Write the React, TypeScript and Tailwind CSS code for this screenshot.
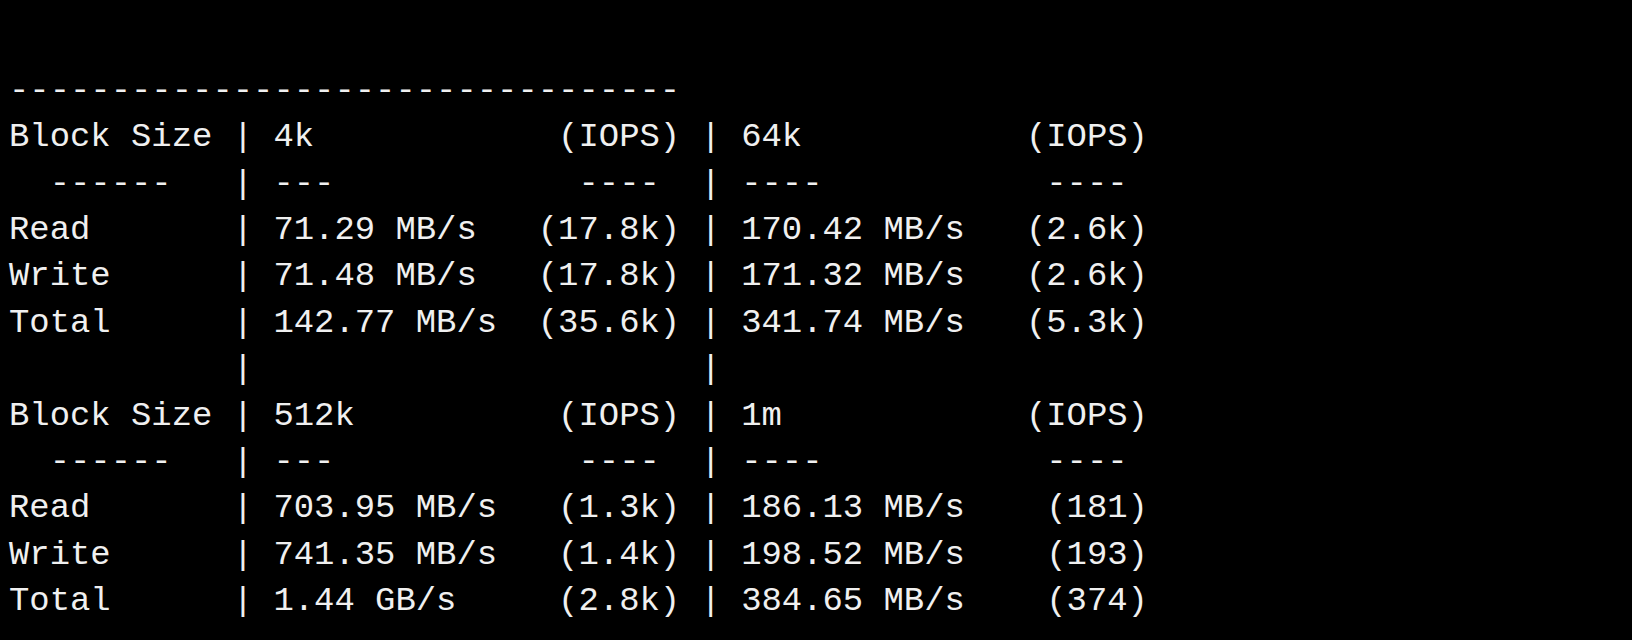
import React from "react";

type TRow = [string, string, string, string, string];

const fmt = (row: TRow) => {
  const [label, a, aIops, b, bIops] = row;
  return `${label.padEnd(10)} | ${a.padEnd(11)} ${aIops.padStart(8)} | ${b.padEnd(11)} ${bIops.padStart(8)}`;
};

const lines: string[] = [
  "---------------------------------",
  fmt(["Block Size", "4k", "(IOPS)", "64k", "(IOPS)"]),
  fmt(["  ------", "---", "---- ", "----", "---- "]),
  fmt(["Read", "71.29 MB/s", "(17.8k)", "170.42 MB/s", "(2.6k)"]),
  fmt(["Write", "71.48 MB/s", "(17.8k)", "171.32 MB/s", "(2.6k)"]),
  fmt(["Total", "142.77 MB/s", "(35.6k)", "341.74 MB/s", "(5.3k)"]),
  "           |                      |",
  fmt(["Block Size", "512k", "(IOPS)", "1m", "(IOPS)"]),
  fmt(["  ------", "---", "---- ", "----", "---- "]),
  fmt(["Read", "703.95 MB/s", "(1.3k)", "186.13 MB/s", "(181)"]),
  fmt(["Write", "741.35 MB/s", "(1.4k)", "198.52 MB/s", "(193)"]),
  fmt(["Total", "1.44 GB/s", "(2.8k)", "384.65 MB/s", "(374)"]),
];

const App = () => {
  return (
    <div className="w-[1632px] h-[640px] overflow-hidden bg-black pt-[68px] pl-[9px]">
      <div className="font-['Liberation_Mono',monospace] text-[33.9px] leading-[46.36px] text-[#f0f0f0]">
        {lines.map((line, i) => (
          <div key={i} className="whitespace-pre">
            {line}
          </div>
        ))}
      </div>
    </div>
  );
};

export default App;
